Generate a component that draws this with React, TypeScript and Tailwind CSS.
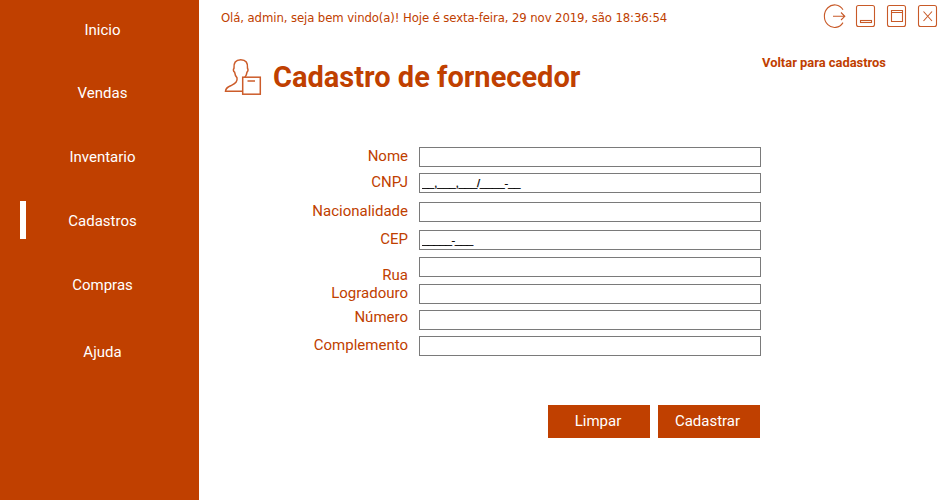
import React from "react";

const nav = [
  { label: "Inicio", height: "h-[60px]" },
  { label: "Vendas", height: "h-[66px]" },
  { label: "Inventario", height: "h-[62px]" },
  { label: "Cadastros", height: "h-[66px]", active: true },
  { label: "Compras", height: "h-[62px]" },
  { label: "Ajuda", height: "h-[72px]" },
];

const labels = [
  { text: "Nome", gap: "" },
  { text: "CNPJ", gap: "mt-[8px]" },
  { text: "Nacionalidade", gap: "mt-[11px]" },
  { text: "CEP", gap: "mt-[10px]" },
  { text: "Rua", gap: "mt-[18px]" },
  { text: "Logradouro", gap: "" },
  { text: "Número", gap: "mt-[6px]" },
  { text: "Complemento", gap: "mt-[10px]" },
];

const fields = [
  { name: "nome", mask: "", gap: "" },
  { name: "cnpj", mask: "__,___,___/____-__", gap: "mt-[6px]" },
  { name: "nacionalidade", mask: "", gap: "mt-[9px]" },
  { name: "cep", mask: "_____-___", gap: "mt-[8px] tracking-[-0.2px]" },
  { name: "rua", mask: "", gap: "mt-[7px]" },
  { name: "logradouro", mask: "", gap: "mt-[7px]" },
  { name: "numero", mask: "", gap: "mt-[6px]" },
  { name: "complemento", mask: "", gap: "mt-[6px]" },
];

function Sidebar() {
  return (
    <nav className="flex w-[199px] shrink-0 flex-col bg-[#c04000] text-[15px] text-white">
      {nav.map((item) => (
        <div key={item.label} className={`relative flex items-center justify-center pl-[6px] ${item.height}`}>
          {item.active && <span className="absolute left-[20px] top-[13px] h-[38px] w-[6px] bg-white" />}
          {item.label}
        </div>
      ))}
    </nav>
  );
}

function WindowControls() {
  return (
    <svg className="block" width="120" height="28" viewBox="820 2 120 28" fill="none" stroke="#c85a28" strokeWidth="1.1">
      <path d="M843 9.8A10.2 11.3 0 1 0 843 22.6M833 16.3H844.5M841 12.5L844.8 16.3L841 20" />
      <rect x="856.5" y="5.5" width="18" height="21" rx="2" />
      <rect x="860.5" y="20.5" width="11" height="2" />
      <rect x="887.5" y="5.5" width="18" height="21" rx="2" />
      <path d="M891.5 10.5H902.5V21.5H891.5ZM891.5 12.5H902.5" />
      <rect x="918.5" y="5.5" width="18" height="21" rx="2" />
      <path d="M923.5 11.5L932 21M932 11.5L923.5 21" />
    </svg>
  );
}

function SupplierIcon() {
  return (
    <svg className="block shrink-0" width="40" height="40" viewBox="223 57 40 40" fill="none" stroke="#cc5c2a" strokeWidth="1.5">
      <path d="M242 91.2H225.5C225.7 87.8 228 87 231.5 85.3C236 83 237.6 81.5 237 77.8C235.4 76 234.8 74 234.6 72.2C233.3 71.5 233 69.5 234 68.3C233.5 63 235.5 59.8 240.8 59.8C246 59.8 248 63 247.5 68.3C248.4 69.5 248 71.5 247 72.2C246.8 74 246 76 244.8 77.4" />
      <rect x="242.7" y="77.2" width="17.6" height="17" />
      <path d="M247.5 81H255" />
    </svg>
  );
}

export default function App() {
  return (
    <div className="flex h-[500px] w-[943px] overflow-hidden bg-white font-['Roboto',sans-serif] text-[#c04000]">
      <Sidebar />
      <main className="flex flex-1 flex-col">
        <header className="flex h-[30px] items-start justify-between pl-[22px] pr-[3px] pt-[2px]">
          <p className="mt-[7px] whitespace-nowrap font-['DejaVu_Sans_Condensed','DejaVu_Sans',sans-serif] text-[13px] leading-[17px] tracking-[-0.1px] [font-stretch:condensed]">
            Olá, admin, seja bem vindo(a)! Hoje é sexta-feira, 29 nov 2019, são 18:36:54
          </p>
          <WindowControls />
        </header>
        <div className="mt-[27px] flex h-[40px] pl-[24px] pr-[57px]">
          <SupplierIcon />
          <h1 className="ml-[10px] whitespace-nowrap text-[29px] font-bold leading-[40px]">Cadastro de fornecedor</h1>
          <a className="ml-auto mt-[-3px] whitespace-nowrap text-[12.9px] font-bold leading-[18px]">Voltar para cadastros</a>
        </div>
        <form className="mt-[50px] flex pl-[100px]">
          <div className="flex w-[109px] flex-col text-right text-[15px] leading-[18px]">
            {labels.map((l) => (
              <label key={l.text} className={`h-[18px] ${l.gap}`}>{l.text}</label>
            ))}
          </div>
          <div className="ml-[11px] flex w-[342px] flex-col">
            {fields.map((f) => (
              <input
                key={f.name}
                name={f.name}
                defaultValue={f.mask}
                className={`h-[20px] w-full border border-[#7a7a7a] bg-white px-[2px] font-['Liberation_Sans',sans-serif] text-[11px] text-black outline-none [-webkit-text-stroke:0.25px_black] ${f.gap}`}
              />
            ))}
          </div>
        </form>
        <div className="mt-[49px] flex gap-[8px] pl-[349px] text-[15px] text-white">
          <button className="h-[33px] w-[102px] bg-[#c04000] pr-[2px]">Limpar</button>
          <button className="h-[33px] w-[102px] bg-[#c04000] pr-[3px]">Cadastrar</button>
        </div>
      </main>
    </div>
  );
}
